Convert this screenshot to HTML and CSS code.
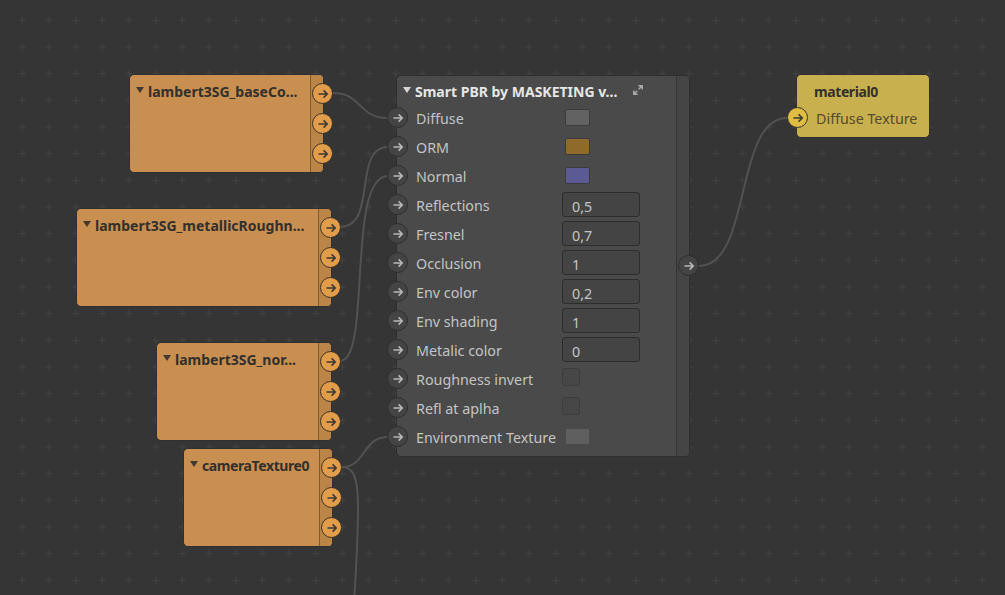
FILE: index.html
```html
<!DOCTYPE html>
<html lang="en">
<head>
<meta charset="utf-8">
<title>Node graph</title>
<link rel="stylesheet" href="styles.css">
</head>
<body>
<main class="canvas">
  <svg class="wires" width="1005" height="595" viewBox="0 0 1005 595" fill="none">
    <defs>
      <symbol id="arrow" viewBox="0 0 12 12">
        <path d="M1.5 6H10M6.6 2.400 10.200 6 6.600 9.600" fill="none" stroke="currentColor" stroke-width="1.600"/>
      </symbol>
      <pattern id="grid" x="9.070" y="6.970" width="26.667" height="26.667" patternUnits="userSpaceOnUse">
        <path d="M9.830 13.330H16.830M13.330 9.830V16.830" stroke="#434343" stroke-width="1"/>
      </pattern>
    </defs>
    <rect width="1005" height="595" fill="url(#grid)"/>
    <g class="wire">
      <path d="M333 93C362 93 358 118 388 118"/>
      <path d="M340 227C378 227 352 147 388 147"/>
      <path d="M340 361C372 361 346 176 388 176"/>
      <path d="M342 467C366 467 362 437 388 437"/>
      <path d="M342 467C352 467 358 475 358 505C358 540 356 570 354.500 595"/>
      <path d="M699 266C752 266 734 118 787 118"/>
    </g>
  </svg>

  <section class="node orange n1">
    <div class="body"><div class="title"><i class="tri"></i><span>lambert3SG_baseCo...</span></div></div>
    <div class="strip"></div>
    <div class="outs">
      <span class="port"><svg><use href="#arrow"/></svg></span>
      <span class="port"><svg><use href="#arrow"/></svg></span>
      <span class="port"><svg><use href="#arrow"/></svg></span>
    </div>
  </section>

  <section class="node orange n2">
    <div class="body"><div class="title"><i class="tri"></i><span>lambert3SG_metallicRoughn...</span></div></div>
    <div class="strip"></div>
    <div class="outs">
      <span class="port"><svg><use href="#arrow"/></svg></span>
      <span class="port"><svg><use href="#arrow"/></svg></span>
      <span class="port"><svg><use href="#arrow"/></svg></span>
    </div>
  </section>

  <section class="node orange n3">
    <div class="body"><div class="title"><i class="tri"></i><span>lambert3SG_nor...</span></div></div>
    <div class="strip"></div>
    <div class="outs">
      <span class="port"><svg><use href="#arrow"/></svg></span>
      <span class="port"><svg><use href="#arrow"/></svg></span>
      <span class="port"><svg><use href="#arrow"/></svg></span>
    </div>
  </section>

  <section class="node orange n4">
    <div class="body"><div class="title"><i class="tri"></i><span class="tight">cameraTexture0</span></div></div>
    <div class="strip"></div>
    <div class="outs">
      <span class="port"><svg><use href="#arrow"/></svg></span>
      <span class="port"><svg><use href="#arrow"/></svg></span>
      <span class="port"><svg><use href="#arrow"/></svg></span>
    </div>
  </section>

  <section class="pbr">
    <div class="pbr-main">
      <div class="pbr-title"><i class="tri light"></i><span class="pbr-name">Smart PBR by MASKETING v...</span>
        <svg class="expand" width="10" height="10" viewBox="0 0 10 10" fill="none"><path d="M.8 9.200 4.300 5.700M5.700 4.300 9.200 .8M5.400 .8H9.200V4.600M.8 5.400V9.200H4.600" stroke="#ababab" stroke-width="1.500"/></svg>
      </div>
      <div class="row"><span class="port dark"><svg><use href="#arrow"/></svg></span><label>Diffuse</label><b class="swatch grey"></b></div>
      <div class="row"><span class="port dark"><svg><use href="#arrow"/></svg></span><label>ORM</label><b class="swatch ochre"></b></div>
      <div class="row"><span class="port dark"><svg><use href="#arrow"/></svg></span><label>Normal</label><b class="swatch violet"></b></div>
      <div class="row"><span class="port dark"><svg><use href="#arrow"/></svg></span><label>Reflections</label><b class="field">0,5</b></div>
      <div class="row"><span class="port dark"><svg><use href="#arrow"/></svg></span><label>Fresnel</label><b class="field">0,7</b></div>
      <div class="row"><span class="port dark"><svg><use href="#arrow"/></svg></span><label>Occlusion</label><b class="field">1</b></div>
      <div class="row"><span class="port dark"><svg><use href="#arrow"/></svg></span><label>Env color</label><b class="field">0,2</b></div>
      <div class="row"><span class="port dark"><svg><use href="#arrow"/></svg></span><label>Env shading</label><b class="field">1</b></div>
      <div class="row"><span class="port dark"><svg><use href="#arrow"/></svg></span><label>Metalic color</label><b class="field">0</b></div>
      <div class="row"><span class="port dark"><svg><use href="#arrow"/></svg></span><label>Roughness invert</label><b class="check"></b></div>
      <div class="row"><span class="port dark"><svg><use href="#arrow"/></svg></span><label>Refl at aplha</label><b class="check"></b></div>
      <div class="row"><span class="port dark"><svg><use href="#arrow"/></svg></span><label>Environment Texture</label><b class="swatch flat"></b></div>
    </div>
    <div class="pbr-strip"><span class="port dark out"><svg><use href="#arrow"/></svg></span></div>
  </section>

  <section class="material">
    <div class="mat-title"><span class="tight">material0</span></div>
    <div class="mat-row"><span class="port gold"><svg><use href="#arrow"/></svg></span><label>Diffuse Texture</label></div>
  </section>
</main>
</body>
</html>
```
FILE: styles.css
```css
* { box-sizing: border-box; }
html, body { margin: 0; padding: 0; }
body { width: 1005px; height: 595px; overflow: hidden; background: #353535; font-family: "Noto Sans", "Open Sans", sans-serif; }

.canvas {
  position: relative;
  width: 1005px;
  height: 595px;
  overflow: hidden;
  background: #353535;
}

.wires { position: absolute; left: 0; top: 0; z-index: 1; }
.wire path { stroke: #525252; stroke-width: 2; }

.port {
  display: flex;
  align-items: center;
  justify-content: center;
  width: 21px;
  height: 21px;
  border-radius: 50%;
  flex: none;
  background: #e29d4b;
  border: 1.500px solid #3a3026;
  color: #3d3a36;
}
.port svg { width: 12px; height: 12px; display: block; }
.port.dark { background: #444444; border-color: #2e2e2e; color: #b8b8b8; }
.port.gold { background: #dfbd42; border-color: #35322a; color: #3d3a30; }

.tight { letter-spacing: -.4px; }

/* orange texture nodes */
.node {
  position: absolute;
  z-index: 2;
  height: 99px;
  display: flex;
  border: 1px solid #2f2f2f;
  border-radius: 5px;
  background: #c98f50;
}
.n1 { left: 129px; top: 74px; width: 195px; }
.n2 { left: 76px; top: 208px; width: 256px; }
.n3 { left: 156px; top: 342px; width: 176px; }
.n4 { left: 183px; top: 448px; width: 150px; }
.body { flex: 1; min-width: 0; }
.title {
  display: flex;
  align-items: center;
  gap: 4px;
  padding: 7px 0 0 6px;
  font-size: 14px;
  line-height: 20px;
  font-weight: 700;
  color: #33302c;
  white-space: nowrap;
}
.tri {
  flex: none;
  width: 0;
  height: 0;
  border-left: 4.500px solid transparent;
  border-right: 4.500px solid transparent;
  border-top: 6px solid #413a30;
  margin-bottom: 5px;
}
.tri.light { border-top-color: #d6d6d6; margin-bottom: 0; }
.strip {
  flex: none;
  width: 13px;
  background: #bb8548;
  border-left: 1px solid #7e5c34;
  border-radius: 0 4px 4px 0;
}
.outs {
  position: absolute;
  right: -10px;
  top: 8px;
  display: flex;
  flex-direction: column;
  gap: 9px;
}

/* main node */
.pbr {
  position: absolute;
  z-index: 2;
  left: 396px;
  top: 75px;
  width: 294px;
  height: 382px;
  display: flex;
  background: #4a4a4a;
  border: 1px solid #2f2f2f;
  border-radius: 5px;
}
.pbr-main { flex: 1; min-width: 0; }
.pbr-strip {
  flex: none;
  width: 13px;
  background: #454545;
  border-left: 1px solid #343434;
  border-radius: 0 4px 4px 0;
  position: relative;
}
.port.out { position: absolute; left: 1px; top: 179px; }
.pbr-title {
  display: flex;
  align-items: center;
  height: 27px;
  padding-left: 6px;
  font-size: 14px;
  font-weight: 700;
  color: #e6e6e6;
  white-space: nowrap;
}
.pbr-name { margin-left: 4px; width: 218px; padding-top: 3px; }
.row {
  display: flex;
  align-items: center;
  height: 29px;
  margin-left: -10px;
  font-size: 14.300px;
  color: #c4c4c4;
  position: relative;
}
.row label { margin-left: 8px; position: relative; top: 1px; white-space: nowrap; }
.swatch, .field, .check { position: absolute; display: block; font-weight: 400; }
.swatch { left: 178px; top: 6px; width: 25px; height: 17px; border: 1px solid #3b3b3b; border-radius: 2px; }
.grey { background: #626262; }
.flat { border-color: #4a4a4a; background: #5f5f5f; }
.ochre { background: #8f6a2a; }
.violet { background: #5b5a94; }
.field {
  left: 175px; top: 2px; width: 78px; height: 25px;
  border: 1px solid #2d2d2d;
  border-radius: 3px;
  background: #444444;
  color: #c4c4c4;
  font-size: 14.300px;
  line-height: 23px;
  padding: 2px 0 0 9px;
}
.check { left: 175px; top: 4px; width: 18px; height: 18px; background: #474747; border: 1px solid #3c3c3c; border-radius: 3px; }

/* material node */
.material {
  position: absolute;
  z-index: 2;
  left: 796px;
  top: 74px;
  width: 134px;
  height: 64px;
  background: #c9b04f;
  border: 1px solid #2f2f2f;
  border-radius: 5px;
}
.mat-title { padding: 7px 0 0 17px; font-size: 14px; line-height: 20px; font-weight: 700; color: #33302c; }
.mat-row { display: flex; align-items: center; margin: 5px 0 0 -10px; }
.mat-row label { margin-left: 8px; font-size: 14.300px; color: #534b2c; white-space: nowrap; position: relative; top: 1px; }
```
